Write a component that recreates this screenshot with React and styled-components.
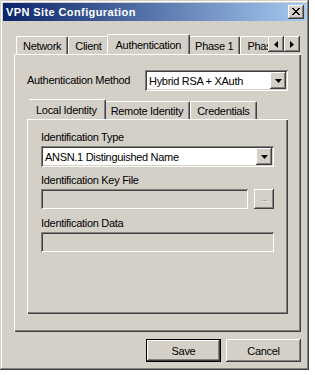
import React from "react";
import styled, { createGlobalStyle, css } from "styled-components";

const FACE = "#D4D0C8";
const LIGHT = "#FFFFFF";
const SHADOW = "#808080";
const DARK = "#404040";

const Global = createGlobalStyle`
  html, body { margin: 0; padding: 0; background: #ffffff; }
  body { font-family: "Liberation Sans", Arial, sans-serif; font-size: 11px; letter-spacing: -0.3px; color: #000; }
  * { box-sizing: border-box; }
`;

const raised = css`
  box-shadow: inset -1px -1px ${DARK}, inset 1px 1px ${LIGHT},
    inset -2px -2px ${SHADOW}, inset 2px 2px ${FACE};
`;

const sunken = css`
  box-shadow: inset 1px 1px ${SHADOW}, inset -1px -1px ${LIGHT},
    inset 2px 2px ${DARK}, inset -2px -2px ${FACE};
`;

const Window = styled.div`
  width: 309px;
  height: 370px;
  background: ${FACE};
  padding: 3px;
  display: flex;
  flex-direction: column;
  box-shadow: inset -1px -1px ${DARK}, inset 1px 1px ${FACE},
    inset -2px -2px ${SHADOW}, inset 2px 2px ${LIGHT};
`;

const TitleBar = styled.div`
  height: 18px;
  flex: none;
  display: flex;
  align-items: center;
  justify-content: space-between;
  padding: 0 2px 0 3px;
  background: linear-gradient(to right, #0a246a, #a6caf0);
`;

const Title = styled.span`
  color: #fff;
  font-weight: bold;
  font-size: 11px;
  letter-spacing: 0.4px;
`;

const CloseButton = styled.div`
  width: 16px;
  height: 14px;
  background: ${FACE};
  ${raised};
  display: flex;
  align-items: center;
  justify-content: center;
  padding-bottom: 1px;
`;

const Body = styled.div`
  flex: 1;
  display: flex;
  flex-direction: column;
  padding: 12px 5px 5px 11px;
`;

const TabStrip = styled.div`
  height: ${(p) => p.$h}px;
  display: flex;
  align-items: flex-end;
  padding-left: 2px;
  margin-top: ${(p) => p.$mt || 0}px;
  flex: none;
`;

const TabList = styled.div`
  flex: 1;
  height: 100%;
  display: flex;
  align-items: flex-end;
  overflow: hidden;
  min-width: 0;
`;

const Tab = styled.div`
  flex: none;
  position: relative;
  height: 18px;
  padding: 0 6px;
  display: flex;
  align-items: center;
  white-space: nowrap;
  background: ${FACE};
  border-left: 1px solid ${LIGHT};
  border-top: 1px solid ${LIGHT};
  border-right: 1px solid ${DARK};
  border-top-left-radius: 2px;
  border-top-right-radius: 2px;
  box-shadow: inset -1px 0 ${SHADOW};
  ${(p) =>
    p.$active &&
    css`
      height: 21px;
      margin: 0 -2px -1px -2px;
      padding: 0 8px 1px 8px;
      z-index: 2;
    `}
`;

const Arrows = styled.div`
  flex: none;
  display: flex;
  align-self: flex-end;
  margin: 0 1px 2px 0;
`;

const ArrowButton = styled.div`
  width: 16px;
  height: 16px;
  background: ${FACE};
  ${raised};
  display: flex;
  align-items: center;
  justify-content: center;
`;

const Page = styled.div`
  flex: 1;
  display: flex;
  flex-direction: column;
  background: ${FACE};
  position: relative;
  z-index: 1;
  padding: ${(p) => p.$pad};
  box-shadow: inset 1px 1px ${LIGHT}, inset -1px -1px ${DARK},
    inset -2px -2px ${SHADOW};
`;

const Row = styled.div`
  display: flex;
  align-items: center;
  justify-content: space-between;
`;

const Label = styled.div`
  line-height: 13px;
  white-space: nowrap;
  margin-top: ${(p) => p.$mt || 0}px;
`;

const Combo = styled.div`
  width: ${(p) => p.$w};
  height: 21px;
  background: #fff;
  ${sunken};
  padding: 2px;
  display: flex;
  align-items: center;
  margin-top: ${(p) => p.$mt || 0}px;
`;

const ComboText = styled.div`
  flex: 1;
  padding-left: 2px;
  white-space: nowrap;
  overflow: hidden;
`;

const DropButton = styled.div`
  width: 16px;
  height: 17px;
  background: ${FACE};
  ${raised};
  display: flex;
  align-items: center;
  justify-content: center;
`;

const FieldRow = styled.div`
  display: flex;
  gap: 6px;
  margin-top: 2px;
`;

const Field = styled.div`
  flex: ${(p) => (p.$fill ? 1 : "none")};
  height: 20px;
  background: ${FACE};
  ${sunken};
  margin-top: ${(p) => p.$mt || 0}px;
`;

const BrowseButton = styled.div`
  width: 20px;
  height: 20px;
  background: ${FACE};
  ${raised};
  display: flex;
  align-items: center;
  justify-content: center;
  color: ${SHADOW};
  text-shadow: 1px 1px ${LIGHT};
  font-size: 9px;
  padding-bottom: 2px;
`;

const Footer = styled.div`
  flex: none;
  display: flex;
  justify-content: flex-end;
  gap: 5px;
  padding-top: 7px;
`;

const Button = styled.div`
  width: 75px;
  height: 23px;
  background: ${FACE};
  display: flex;
  align-items: center;
  justify-content: center;
  ${(p) =>
    p.$default
      ? css`
          border: 1px solid #000;
          box-shadow: inset -1px -1px ${DARK}, inset 1px 1px ${LIGHT},
            inset -2px -2px ${SHADOW}, inset 2px 2px ${FACE};
        `
      : raised}
`;

const Down = () => (
  <svg width="7" height="4" viewBox="0 0 7 4">
    <path d="M0 0h7L3.5 4z" fill="#000" />
  </svg>
);

const Left = () => (
  <svg width="4" height="7" viewBox="0 0 4 7">
    <path d="M4 0v7L0 3.5z" fill="#000" />
  </svg>
);

const Right = () => (
  <svg width="4" height="7" viewBox="0 0 4 7">
    <path d="M0 0v7L4 3.5z" fill="#000" />
  </svg>
);

const CloseX = () => (
  <svg width="8" height="7" viewBox="0 0 8 7">
    <path
      d="M0 0h2v1h1v1h2v-1h1v-1h2v1h-1v1h-1v1h-1v1h1v1h1v1h1v1h-2v-1h-1v-1h-2v1h-1v1h-2v-1h1v-1h1v-1h1v-1h-1v-1h-1v-1h-1z"
      fill="#000"
    />
  </svg>
);

export default function App() {
  return (
    <>
      <Global />
      <Window>
        <TitleBar>
          <Title>VPN Site Configuration</Title>
          <CloseButton>
            <CloseX />
          </CloseButton>
        </TitleBar>
        <Body>
          <TabStrip $h={21}>
            <TabList>
              <Tab>Network</Tab>
              <Tab>Client</Tab>
              <Tab $active>Authentication</Tab>
              <Tab>Phase 1</Tab>
              <Tab>Phase 2</Tab>
            </TabList>
            <Arrows>
              <ArrowButton>
                <Left />
              </ArrowButton>
              <ArrowButton>
                <Right />
              </ArrowButton>
            </Arrows>
          </TabStrip>
          <Page $pad="16px 13px 18px 13px">
            <Row>
              <Label>Authentication Method</Label>
              <Combo $w="143px">
                <ComboText>Hybrid RSA + XAuth</ComboText>
                <DropButton>
                  <Down />
                </DropButton>
              </Combo>
            </Row>
            <TabStrip $h={22} $mt={6}>
              <TabList>
                <Tab $active>Local Identity</Tab>
                <Tab>Remote Identity</Tab>
                <Tab>Credentials</Tab>
              </TabList>
            </TabStrip>
            <Page $pad="12px 14px 0 14px">
              <Label>Identification Type</Label>
              <Combo $w="100%" $mt={2}>
                <ComboText>ANSN.1 Distinguished Name</ComboText>
                <DropButton>
                  <Down />
                </DropButton>
              </Combo>
              <Label $mt={7}>Identification Key File</Label>
              <FieldRow>
                <Field $fill />
                <BrowseButton>...</BrowseButton>
              </FieldRow>
              <Label $mt={8}>Identification Data</Label>
              <Field $mt={2} />
            </Page>
          </Page>
          <Footer>
            <Button $default>Save</Button>
            <Button>Cancel</Button>
          </Footer>
        </Body>
      </Window>
    </>
  );
}
